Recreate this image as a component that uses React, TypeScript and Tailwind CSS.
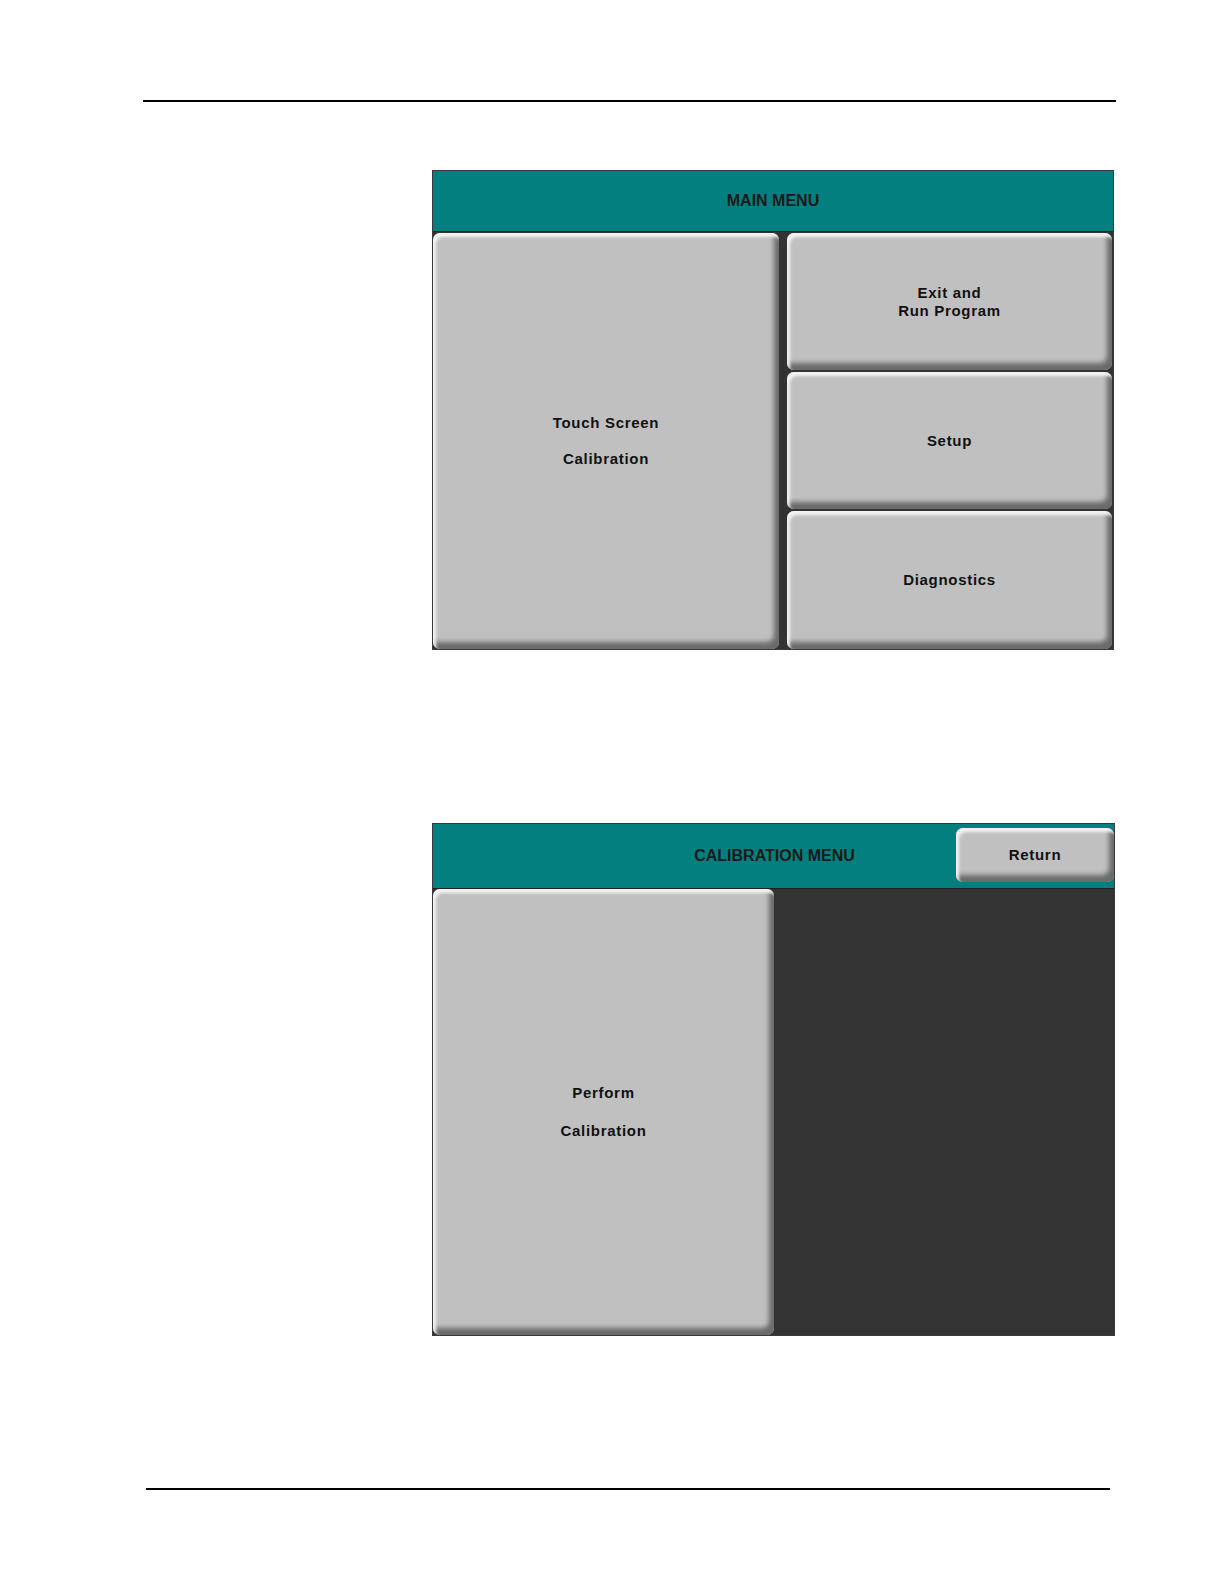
const font = { fontFamily: '"Liberation Sans", Arial, sans-serif' };

function BevelButton({
  lines,
  className = '',
  spacing = 'gap-0',
}: {
  lines: string[];
  className?: string;
  spacing?: string;
}) {
  return (
    <div
      className={`flex flex-col items-center justify-center rounded-[7px] bg-[#c0c0c0] text-[15px] font-bold tracking-[0.7px] text-[#111] shadow-[inset_3px_4px_3px_#f2f2f2,inset_-5px_-7px_5px_#6a6a6a] ${spacing} ${className}`}
    >
      {lines.map((l) => (
        <span key={l} className="leading-[18px]">
          {l}
        </span>
      ))}
    </div>
  );
}

export default function App() {
  return (
    <div className="min-h-[1584px] w-[1224px] bg-white" style={font}>
      <div className="pt-[100px]">
        <div className="ml-[143px] h-[2px] w-[973px] bg-black" />

        {/* main menu */}
        <div className="ml-[432px] mt-[68px] flex h-[480px] w-[682px] flex-col border border-[#3a3a3a] bg-[#333]">
          <div className="flex h-[61px] items-center justify-center border-b border-[#222] bg-[#037f7f] text-[16px] font-bold text-[#1a1a1a]">
            MAIN MENU
          </div>
          <div className="flex flex-1 gap-[8px] pt-[1px]">
            <BevelButton
              lines={['Touch Screen', 'Calibration']}
              spacing="gap-[18px]"
              className="w-[346px]"
            />
            <div className="flex flex-1 flex-col gap-[2px] pr-[1px]">
              <BevelButton lines={['Exit and', 'Run Program']} className="h-[137px]" />
              <BevelButton lines={['Setup']} className="h-[137px]" />
              <BevelButton lines={['Diagnostics']} className="flex-1" />
            </div>
          </div>
        </div>

        {/* calibration menu */}
        <div className="ml-[432px] mt-[173px] flex h-[513px] w-[683px] flex-col border border-[#3a3a3a] bg-[#333]">
          <div className="flex h-[65px] border-b border-[#222] bg-[#037f7f]">
            <div className="flex flex-1 items-center justify-center pl-[160px] text-[16px] font-bold text-[#1a1a1a]">
              CALIBRATION MENU
            </div>
            <BevelButton lines={['Return']} className="mt-[4px] h-[54px] w-[158px]" />
          </div>
          <div className="flex flex-1">
            <BevelButton
              lines={['Perform', 'Calibration']}
              spacing="gap-[20px]"
              className="w-[341px]"
            />
          </div>
        </div>

        <div className="ml-[146px] mt-[152px] h-[2px] w-[964px] bg-black" />
      </div>
    </div>
  );
}
